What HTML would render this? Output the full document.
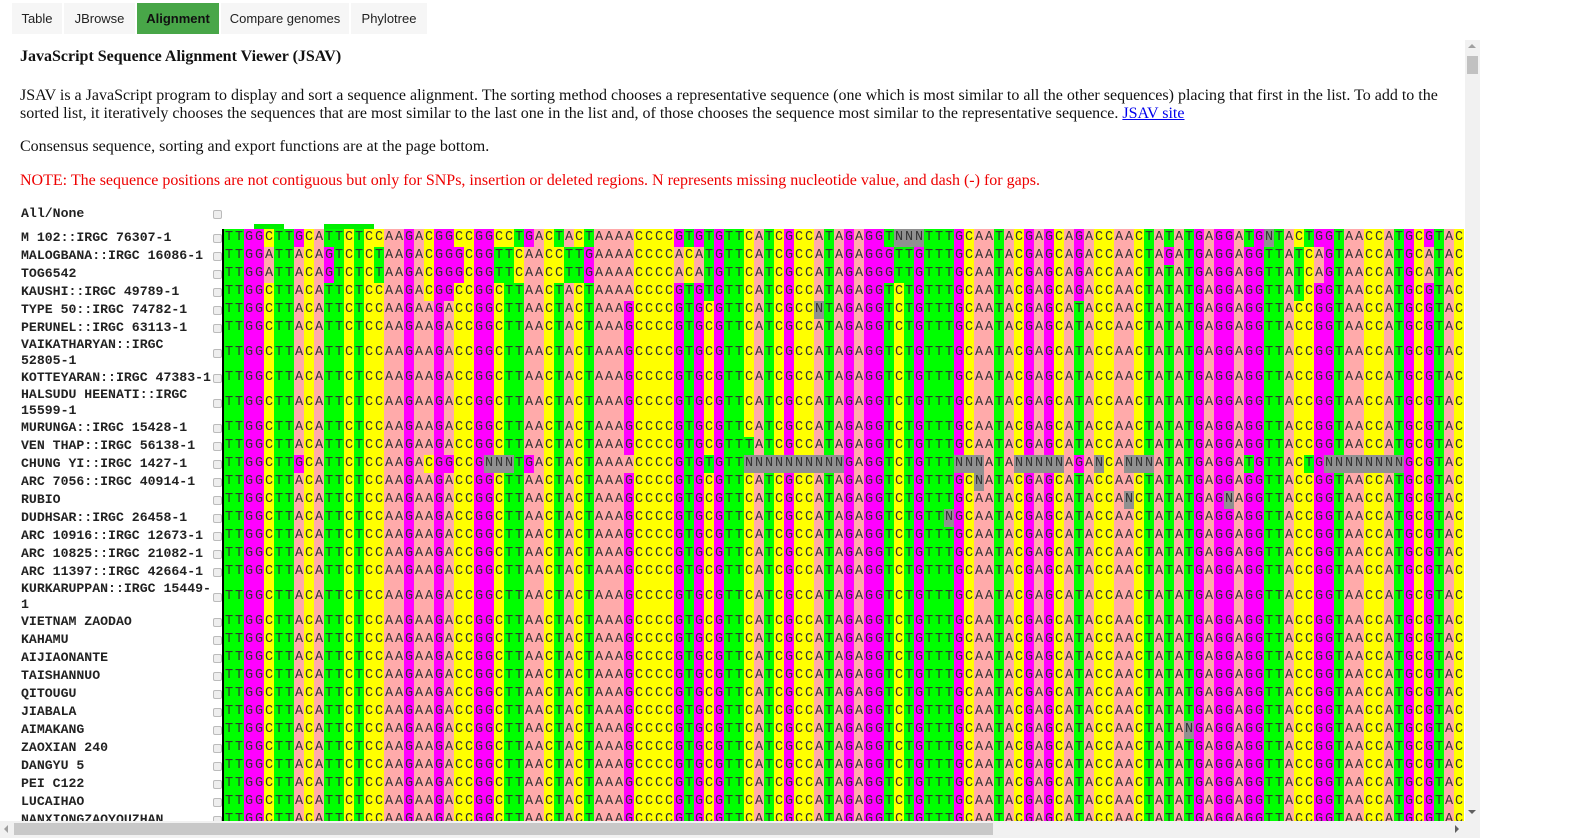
<!DOCTYPE html>
<html><head><meta charset="utf-8">
<style>
body{margin:0;width:1574px;height:840px;overflow:hidden;background:#fff;font-family:"Liberation Serif",serif;position:relative}
.tab{position:absolute;top:3px;height:31px;background:#f6f6f6;font:13px "Liberation Sans",sans-serif;line-height:31px;color:#222;text-align:center}
.tab.on{background:#48a648;color:#111;font-weight:bold}
#panel{position:absolute;left:0;top:40px;width:1465px;height:781px;overflow:hidden}
.h{position:absolute;left:20px;font-size:16px;color:#111}
.lab{position:absolute;left:21px;font:bold 13.2px/16px "Liberation Mono",monospace;color:#222;white-space:pre}
.cb{position:absolute;left:213px;width:7px;height:7px;border:1px solid #bbb;border-radius:2px;background:#eee}
.row{position:absolute;left:224px;height:18px;white-space:nowrap;font:13.5px "Liberation Mono",monospace;color:#333}
.row span{display:inline-block;width:10px;text-align:center;height:100%}
.A{background:#ffaaaa}.C{background:#ffff00}.G{background:#ff00ff}.T{background:#00ff00}.N{background:#909090}
</style></head><body>
<div class="tab" style="left:12px;width:50px">Table</div>
<div class="tab" style="left:64px;width:71px">JBrowse</div>
<div class="tab on" style="left:137px;width:82px">Alignment</div>
<div class="tab" style="left:221px;width:128px">Compare genomes</div>
<div class="tab" style="left:351px;width:76px">Phylotree</div>
<div id="panel">
<div class="h" style="top:8px;font-weight:bold">JavaScript Sequence Alignment Viewer (JSAV)</div>
<div class="h" style="top:47px;width:1430px;line-height:18px">JSAV is a JavaScript program to display and sort a sequence alignment. The sorting method chooses a representative sequence (one which is most similar to all the other sequences) placing that first in the list. To add to the sorted list, it iteratively chooses the sequences that are most similar to the last one in the list and, of those chooses the sequence most similar to the representative sequence. <span style="color:#00e;text-decoration:underline">JSAV site</span></div>
<div class="h" style="top:98px">Consensus sequence, sorting and export functions are at the page bottom.</div>
<div class="h" style="top:132px;color:#e00">NOTE: The sequence positions are not contiguous but only for SNPs, insertion or deleted regions. N represents missing nucleotide value, and dash (-) for gaps.</div>
<div class="lab" style="top:166px">All/None</div>
<div class="cb" style="top:170px"></div>
<div style="position:absolute;left:254px;top:184px;width:30px;height:5px;background:#00ee00"></div>
<div style="position:absolute;left:324px;top:184px;width:50px;height:5px;background:#00ee00"></div>
<div id="aln"></div>
</div>
<div style="position:absolute;left:1465px;top:40px;width:15px;height:781px;background:#f1f1f1"></div>
<div style="position:absolute;left:1467px;top:56px;width:11px;height:18px;background:#c1c1c1"></div>
<div style="position:absolute;left:1468px;top:44px;width:0;height:0;border-left:4px solid transparent;border-right:4px solid transparent;border-bottom:4px solid #a0a0a0"></div>
<div style="position:absolute;left:1468px;top:810px;width:0;height:0;border-left:4px solid transparent;border-right:4px solid transparent;border-top:4px solid #606060"></div>
<div style="position:absolute;left:0;top:821px;width:1480px;height:17px;background:#f1f1f1"></div>
<div style="position:absolute;left:14px;top:823px;width:979px;height:12px;background:#c8c8c8"></div>
<div style="position:absolute;left:1455px;top:825px;width:0;height:0;border-top:4px solid transparent;border-bottom:4px solid transparent;border-left:4px solid #606060"></div>
<div style="position:absolute;left:4px;top:825px;width:0;height:0;border-top:4px solid transparent;border-bottom:4px solid transparent;border-right:4px solid #a0a0a0"></div>
<script>
var ref="TTGGCTTACATTCTCCAAGAAGACCGGCTTAACTACTAAAGCCCCGTGCGTTCATCGCCATAGAGGTCTGTTTGCAATACGAGCATACCAACTATATGAGGAGGTTACCGGTAACCATGCGTACT";
function mod(o){var s=ref.split('');for(var k in o){s[+k]=o[k];}return s.join('');}
var r1="TTGGCTTGCATTCTCCAAGACGGCCGGCCTGACTACTAAAAC"+"CCC"+"GTGTGTTCATCGCCATAGAGGTNNNTTTGCAATACGAG"+"CAGACCAACTATATGAGGATGNTACTGGTAACCATGCGTACT";
var r2="TTGGATTACAGTCTCTAAGACGGGCGGTTCAACCTTGAAAAC"+"CCC"+"ACATGTTCATCGCCATAGAGGGTTGTTTGCAATACGAG"+"CAGACCAACTAGATGAGGAGGTTATCAGTAACCATGCATACT";
var r3="TTGGATTACAGTCTCTAAGACGGGCGGTTCAACCTTGAAAAC"+"CCC"+"ACATGTTCATCGCCATAGAGGGTTGTTTGCAATACGAG"+"CAGACCAACTATATGAGGAGGTTATCAGTAACCATGCATACT";
var r4="TTGGCTTACATTCTCCAAGACGGCCGGCTTAACTACTAAAAC"+"CCC"+"GTGTGTTCATCGCCATAGAGGTCTGTTTGCAATACGAG"+"CAGACCAACTATATGAGGAGGTTATCGGTAACCATGCGTACT";
var chung="TTGGCTTGCATTCTCCAAGACGGCCGNNNTGACTACTAAAACCCCGTGTGTTNNNNNNNNNNGAGGTCTGTTTNNNATANNNNNAGANCANNNATATGAGGATGTTACTGNNNNNNNNGCGTACT";
var rows=[
["M 102::IRGC 76307-1",r1],["MALOGBANA::IRGC 16086-1",r2],["TOG6542",r3],["KAUSHI::IRGC 49789-1",r4],
["TYPE 50::IRGC 74782-1",mod({59:"N"})],["PERUNEL::IRGC 63113-1",ref],["VAIKATHARYAN::IRGC\n52805-1",ref],
["KOTTEYARAN::IRGC 47383-1",ref],["HALSUDU HEENATI::IRGC\n15599-1",ref],["MURUNGA::IRGC 15428-1",ref],
["VEN THAP::IRGC 56138-1",mod({52:"T"})],["CHUNG YI::IRGC 1427-1",chung],["ARC 7056::IRGC 40914-1",mod({75:"N"})],
["RUBIO",mod({90:"N",100:"N"})],["DUDHSAR::IRGC 26458-1",mod({72:"N"})],["ARC 10916::IRGC 12673-1",ref],
["ARC 10825::IRGC 21082-1",ref],["ARC 11397::IRGC 42664-1",ref],["KURKARUPPAN::IRGC 15449-\n1",ref],
["VIETNAM ZAODAO",ref],["KAHAMU",ref],["AIJIAONANTE",ref],["TAISHANNUO",ref],["QITOUGU",ref],["JIABALA",ref],
["AIMAKANG",mod({96:"N"})],["ZAOXIAN 240",ref],["DANGYU 5",ref],["PEI C122",ref],["LUCAIHAO",ref],["NANXIONGZAOYOUZHAN",ref]];
var h="",y=189;
for(var i=0;i<rows.length;i++){var two=rows[i][0].indexOf("\n")>=0;var hh=two?32:18;
h+='<div class="lab" style="top:'+(y+(two?0:1))+'px">'+rows[i][0]+'</div>';
h+='<div class="cb" style="top:'+(y+hh/2-4)+'px"></div>';
var s=rows[i][1],c="";for(var j=0;j<124;j++){var ch=s[j];c+='<span class="'+ch+'" style="line-height:'+hh+'px">'+ch+'</span>';}
h+='<div class="row" style="top:'+y+'px;height:'+hh+'px">'+c+'</div>';y+=hh;}
h+='<div style="position:absolute;left:222px;top:189px;width:2px;height:'+(y-189)+'px;background:#000"></div>';
document.getElementById("aln").innerHTML=h;
</script>
</body></html>
